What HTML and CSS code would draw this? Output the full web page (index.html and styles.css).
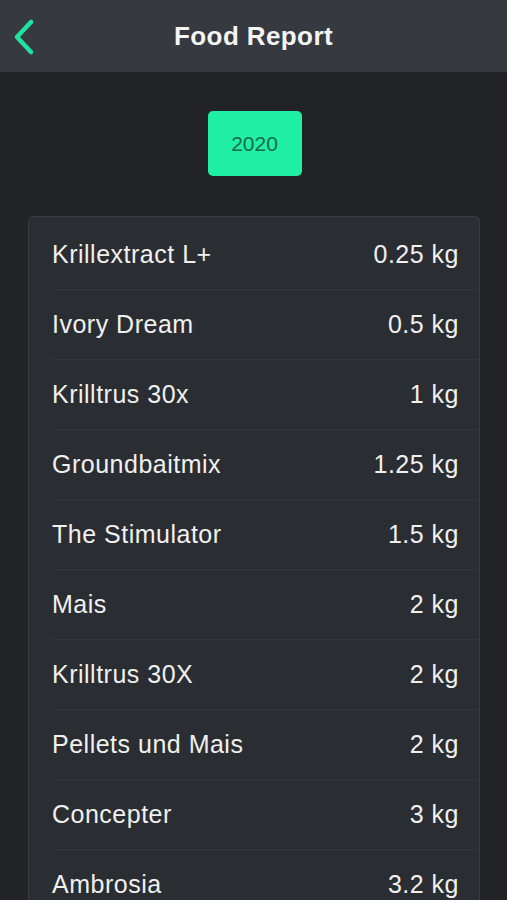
FILE: index.html
```html
<!DOCTYPE html>
<html>
<head>
<meta charset="utf-8">
<link rel="stylesheet" href="styles.css">
</head>
<body>
<header class="topbar">
  <svg class="back" width="24" height="36" viewBox="0 0 24 36"><path d="M19 3 L5 18 L19 33" fill="none" stroke="#1ee2a0" stroke-width="4.5" stroke-linecap="round" stroke-linejoin="round"/></svg>
  <h1 class="title">Food Report</h1>
</header>
<main class="content">
  <div class="year-wrap"><button class="year">2020</button></div>
  <section class="card">
    <div class="row"><span>Krillextract L+</span><span>0.25 kg</span></div>
    <div class="row"><span>Ivory Dream</span><span>0.5 kg</span></div>
    <div class="row"><span>Krilltrus 30x</span><span>1 kg</span></div>
    <div class="row"><span>Groundbaitmix</span><span>1.25 kg</span></div>
    <div class="row"><span>The Stimulator</span><span>1.5 kg</span></div>
    <div class="row"><span>Mais</span><span>2 kg</span></div>
    <div class="row"><span>Krilltrus 30X</span><span>2 kg</span></div>
    <div class="row"><span>Pellets und Mais</span><span>2 kg</span></div>
    <div class="row"><span>Concepter</span><span>3 kg</span></div>
    <div class="row"><span>Ambrosia</span><span>3.2 kg</span></div>
  </section>
</main>
</body>
</html>
```
FILE: styles.css
```css
html, body {
  margin: 0;
  padding: 0;
  height: 100%;
  overflow: hidden;
}
body {
  background: #212327;
  font-family: "Liberation Sans", Arial, sans-serif;
  color: #f0f0f0;
}
.topbar {
  height: 72px;
  background: #363940;
  display: flex;
  align-items: center;
  justify-content: center;
  position: relative;
}
.back {
  position: absolute;
  left: 12px;
  top: 19px;
}
.title {
  margin: 0;
  font-size: 26px;
  font-weight: bold;
  color: #f4f4f4;
  letter-spacing: 0.4px;
}
.content {
  padding: 39px 27px 0 28px;
}
.year-wrap {
  display: flex;
  justify-content: center;
  padding-left: 1px;
}
.year {
  width: 94px;
  height: 65px;
  border: none;
  border-radius: 5px;
  background: #1ff0a6;
  color: #176a4a;
  font-family: "Liberation Sans", Arial, sans-serif;
  font-size: 21px;
  padding: 0;
}
.card {
  margin-top: 40px;
  background: #2a2d31;
  border: 1px solid #383b40;
  border-radius: 5px;
  padding-top: 3px;
}
.row {
  height: 69px;
  border-bottom: 1px solid #33363b;
  margin-left: 23px;
  padding-right: 20px;
  display: flex;
  align-items: center;
  justify-content: space-between;
  font-size: 25px;
  letter-spacing: 0.5px;
}
```
